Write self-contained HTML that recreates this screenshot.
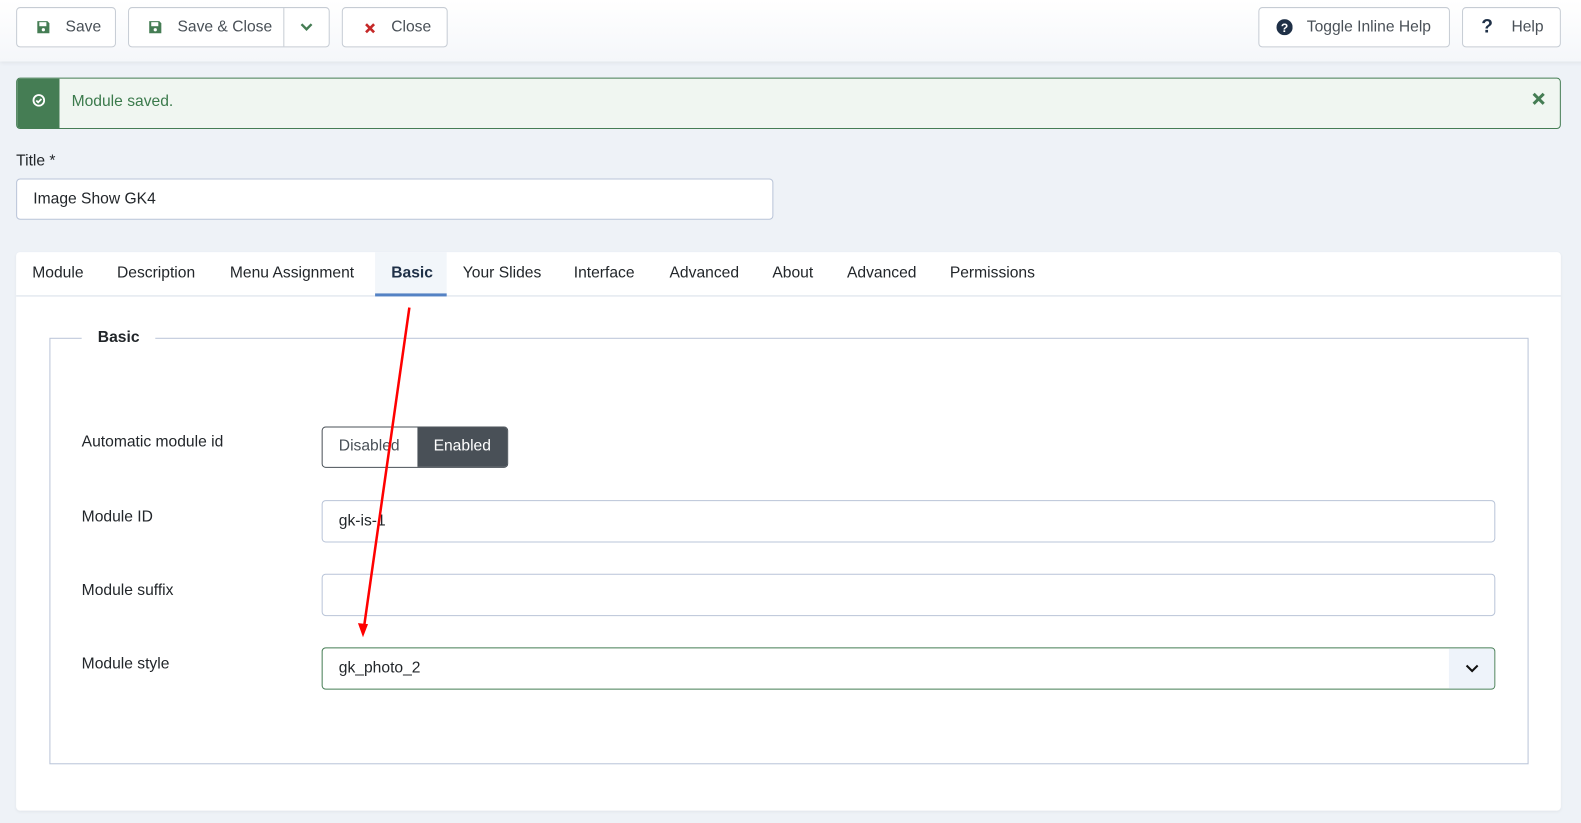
<!DOCTYPE html>
<html><head><style>
*{box-sizing:border-box}
html,body{margin:0;width:1581px;height:823px;background:#eef2f7;overflow:hidden}
#w{position:absolute;left:0;top:0;width:1568px;height:816px;transform:scale(1.0083);transform-origin:0 0;font-family:"Liberation Sans",sans-serif;color:#22262a;font-size:15.5px}
.tb{position:absolute;left:0;top:0;width:1581px;height:61px;background:linear-gradient(#fff,#f5f7fa);box-shadow:0 2px 4px rgba(0,0,0,.06)}
.btn{position:absolute;top:7px;height:40px;border:1px solid #c6ccd4;border-radius:4px;background:#fff;display:flex;align-items:center;color:#495057}
.abs{position:absolute}
.inp{position:absolute;background:#fff;border:1px solid #b9c4d8;border-radius:4px;display:flex;align-items:center;padding-left:16px}
.tab{position:absolute;top:262px;color:#22262a}
.lbl{position:absolute;left:81px;color:#22262a}
</style></head><body><div id="w">
<div class="tb"></div>
<div class="btn" style="left:16px;width:99px"><svg class="abs" style="left:19px;top:12px" width="14" height="14" viewBox="0 0 14 14"><path d="M1 1h10l2 2v10H1z" fill="#457d54"/><rect x="3" y="2" width="7" height="4" fill="#fff"/><circle cx="7" cy="9.5" r="1.6" fill="#fff"/></svg><span class="abs" style="left:48px">Save</span></div>
<div class="btn" style="left:127px;width:200px"><svg class="abs" style="left:19px;top:12px" width="14" height="14" viewBox="0 0 14 14"><path d="M1 1h10l2 2v10H1z" fill="#457d54"/><rect x="3" y="2" width="7" height="4" fill="#fff"/><circle cx="7" cy="9.5" r="1.6" fill="#fff"/></svg><span class="abs" style="left:48px">Save &amp; Close</span><div class="abs" style="left:153px;top:0;height:38px;border-left:1px solid #c6ccd4"></div><svg class="abs" style="left:169px;top:14px" width="14" height="10" viewBox="0 0 14 10"><path d="M2 2l5 5 5-5" stroke="#457d54" stroke-width="2.4" fill="none"/></svg></div>
<div class="btn" style="left:339px;width:105px"><svg class="abs" style="left:21px;top:14px" width="12" height="12" viewBox="0 0 12 12"><path d="M2 2l8 8M10 2l-8 8" stroke="#c52827" stroke-width="2.6"/></svg><span class="abs" style="left:48px">Close</span></div>
<div class="btn" style="left:1248px;width:190px"><svg class="abs" style="left:17px;top:11px" width="16" height="16" viewBox="0 0 16 16"><circle cx="8" cy="8" r="8" fill="#1f3047"/><text x="8" y="12.5" font-size="12" font-weight="bold" fill="#fff" text-anchor="middle" font-family="Liberation Sans">?</text></svg><span class="abs" style="left:47px">Toggle Inline Help</span></div>
<div class="btn" style="left:1450px;width:98px"><span class="abs" style="left:18px;font-weight:bold;font-size:19px;color:#1f3047">?</span><span class="abs" style="left:48px">Help</span></div>

<div class="abs" style="left:16px;top:77px;width:1532px;height:51px;border:1px solid #457d54;border-radius:4px;background:#f0f6f1;overflow:hidden">
<div class="abs" style="left:0;top:0;width:42px;height:49px;background:#457d54"></div>
<svg class="abs" style="left:15px;top:15px" width="13" height="13" viewBox="0 0 13 13"><circle cx="6.5" cy="6.5" r="5.3" stroke="#fff" stroke-width="1.8" fill="none"/><path d="M4 6.7l1.8 1.8 3.3-3.3" stroke="#fff" stroke-width="1.8" fill="none"/></svg>
<span class="abs" style="left:54px;top:14px;color:#3b7a4c">Module saved.</span>
<svg class="abs" style="left:1502px;top:13px" width="14" height="14" viewBox="0 0 14 14"><path d="M2 2l10 10M12 2L2 12" stroke="#457d54" stroke-width="3"/></svg>
</div>

<div class="abs" style="left:16px;top:151px">Title *</div>
<div class="inp" style="left:16px;top:177px;width:751px;height:41px">Image Show GK4</div>

<div class="abs" style="left:16px;top:250px;width:1532px;height:554px;background:#fff;border-radius:4px;box-shadow:0 1px 3px rgba(0,0,0,.05)"></div>
<div class="abs" style="left:16px;top:293px;width:1532px;border-top:1px solid #d7dfe9"></div>
<div class="abs" style="left:372px;top:250px;width:71px;height:44px;background:#f2f6fa;border-bottom:3px solid #5482c4"></div>
<span class="tab" style="left:32px">Module</span>
<span class="tab" style="left:116px">Description</span>
<span class="tab" style="left:228px">Menu Assignment</span>
<span class="tab" style="left:388px;font-weight:bold;color:#1f3047">Basic</span>
<span class="tab" style="left:459px">Your Slides</span>
<span class="tab" style="left:569px">Interface</span>
<span class="tab" style="left:664px">Advanced</span>
<span class="tab" style="left:766px">About</span>
<span class="tab" style="left:840px">Advanced</span>
<span class="tab" style="left:942px">Permissions</span>

<div class="abs" style="left:49px;top:335px;width:1467px;height:423px;border:1px solid #b9c4d8"></div>
<div class="abs" style="left:81px;top:326px;background:#fff;padding:0 16px;font-weight:bold;color:#22262a">Basic</div>

<span class="lbl" style="top:430px">Automatic module id</span>
<div class="abs" style="left:319px;top:423px;width:185px;height:41px;border:1px solid #495057;border-radius:4px;overflow:hidden;background:#fff">
<span class="abs" style="left:16px;top:10px;color:#495057">Disabled</span>
<div class="abs" style="left:94px;top:0;width:91px;height:41px;background:#495057;color:#fff;padding:10px 0 0 16px">Enabled</div></div>

<span class="lbl" style="top:504px">Module ID</span>
<div class="inp" style="left:319px;top:496px;width:1164px;height:42px">gk-is-1</div>
<span class="lbl" style="top:577px">Module suffix</span>
<div class="inp" style="left:319px;top:569px;width:1164px;height:42px"></div>
<span class="lbl" style="top:650px">Module style</span>
<div class="inp" style="left:319px;top:642px;width:1164px;height:42px;border-color:#457d54;overflow:hidden">gk_photo_2<div class="abs" style="right:0;top:0;width:45px;height:40px;background:#eef3fa"></div><svg class="abs" style="right:15px;top:15px" width="14" height="10" viewBox="0 0 14 10"><path d="M1.5 2l5.5 5.5 5.5-5.5" stroke="#111" stroke-width="2" fill="none"/></svg></div>

<svg class="abs" style="left:0;top:0" width="1568" height="816"><path d="M406 305L361 622" stroke="#f00" stroke-width="2.5"/><path d="M355 618l5 14 5-13z" fill="#f00"/></svg>
</div></body></html>
